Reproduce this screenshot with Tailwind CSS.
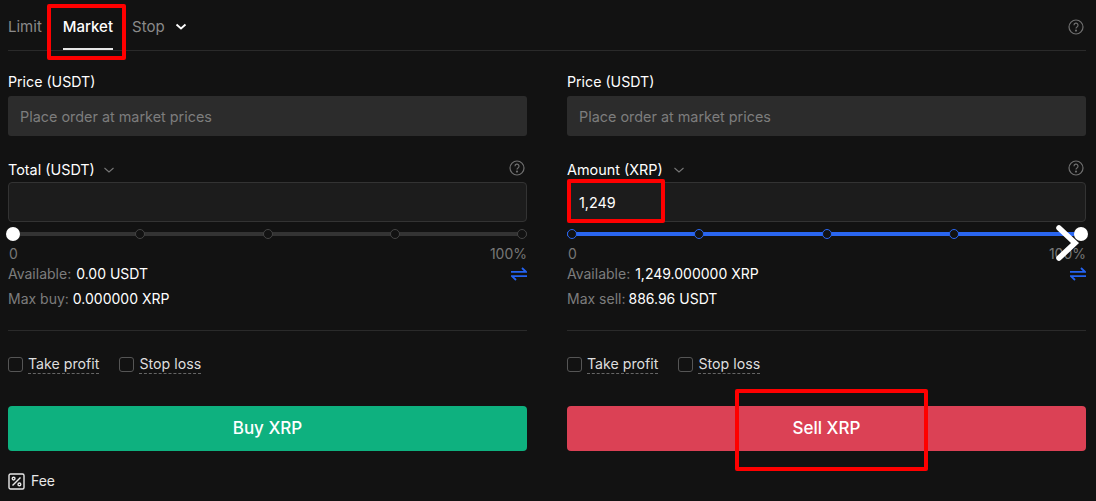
<!DOCTYPE html>
<html><head><meta charset="utf-8"><script src="https://cdn.jsdelivr.net/npm/@tailwindcss/browser@4"></script></head>
<body class="bg-[#121212]">
<div class="relative w-[1096px] h-[501px] overflow-hidden bg-[#121212] pl-2 pr-2.5 font-['Inter',sans-serif] text-sm text-white">
  <!-- Tabs -->
  <div class="flex h-[51px] items-start border-b border-[#2a2a2a] text-[15px] text-[#8a8a8a]">
    <span class="mt-[17px] leading-5">Limit</span>
    <span class="relative ml-[21px] mt-[17px] h-[33px] font-medium leading-5 text-white">Market<span class="absolute bottom-0 left-0 h-0.5 w-full bg-[#e6e6e6]"></span></span>
    <span class="ml-[19px] mt-[17px] leading-5">Stop</span>
    <svg class="ml-2.5 mt-[21px]" width="12" height="12" viewBox="0 0 12 12" fill="none" stroke="#fff" stroke-width="1.8"><path d="M1.5 3.5 6 7.5l4.5-4"/></svg>
    <svg class="ml-auto mr-[2px] mt-[19px]" width="16" height="16" viewBox="0 0 16 16" fill="none" stroke="#6f6f6f" stroke-width="1.2"><circle cx="8" cy="8" r="7"/><path d="M6 6.2a2 2 0 1 1 3 1.7c-.7.4-1 .8-1 1.6"/><circle cx="8" cy="11.6" r=".5" fill="#6f6f6f"/></svg>
  </div>
  <div class="grid grid-cols-[519px_519px] gap-x-10">
    <!-- Buy -->
    <div>
      <div class="mt-[21px] text-[14.2px] leading-5">Price (USDT)</div>
      <div class="mt-1 flex h-10 items-center rounded-[3px] bg-[#2c2c2c] pl-3 pt-[2px] text-[14.4px] text-[#7d7d7d]">Place order at market prices</div>
      <div class="mt-6 flex h-5 items-center text-[14.4px]">Total (USDT)<svg class="ml-2" width="12" height="12" viewBox="0 0 12 12" fill="none" stroke="#777" stroke-width="1.1"><path d="M1.5 4 6 8l4.5-4"/></svg>
        <svg class="ml-auto mr-[2px] -mt-1" width="16" height="16" viewBox="0 0 16 16" fill="none" stroke="#6f6f6f" stroke-width="1.2"><circle cx="8" cy="8" r="7"/><path d="M6 6.2a2 2 0 1 1 3 1.7c-.7.4-1 .8-1 1.6"/><circle cx="8" cy="11.6" r=".5" fill="#6f6f6f"/></svg></div>
      <div class="mt-[2px] h-10 rounded-[4px] border border-[#333] bg-[#1c1c1c]"></div>
      <div class="relative mt-[5px] flex h-3.5 items-center">
        <div class="absolute inset-x-0 h-1 bg-[#333]"></div>
        <div class="relative flex w-full items-center justify-between">
          <span class="-mx-[2px] h-3.5 w-3.5 rounded-full bg-white"></span>
          <span class="h-2.5 w-2.5 rounded-full border border-[#444] bg-[#121212]"></span>
          <span class="h-2.5 w-2.5 rounded-full border border-[#444] bg-[#121212]"></span>
          <span class="h-2.5 w-2.5 rounded-full border border-[#444] bg-[#121212]"></span>
          <span class="h-2.5 w-2.5 rounded-full border border-[#444] bg-[#121212]"></span>
        </div>
      </div>
      <div class="mt-[3px] flex justify-between leading-5 text-[#777]"><span class="pl-px">0</span><span>100%</span></div>
      <div class="flex h-5 items-center text-[#7d7d7d]">Available:<span class="ml-[5px] text-white">0.00 USDT</span>
        <svg class="ml-auto" width="16" height="14" viewBox="0 0 16 14" fill="none" stroke="#2463f2" stroke-width="1.8"><path d="M0 4.8h15L11 1M16 9.2H1L5 13"/></svg></div>
      <div class="mt-[5px] flex h-5 items-center text-[#7d7d7d]">Max buy:<span class="ml-1 text-white">0.000000 XRP</span></div>
      <div class="mt-[21px] h-px bg-[#2a2a2a]"></div>
      <div class="mt-[23px] flex h-5 items-center text-[14.2px] text-[#dedede]">
        <span class="h-[15px] w-[15px] rounded-[3px] border border-[#555]"></span>
        <span class="ml-[5px] border-b border-dashed border-[#666] leading-[18px]">Take profit</span>
        <span class="ml-5 h-[15px] w-[15px] rounded-[3px] border border-[#555]"></span>
        <span class="ml-[5px] border-b border-dashed border-[#666] leading-[18px]">Stop loss</span>
      </div>
      <button class="mt-[32px] flex h-[45px] w-full items-center justify-center rounded-[4px] bg-[#0eb17f] text-[17px] font-medium text-white">Buy XRP</button>
      <div class="mt-5 flex h-5 items-center text-[#e8e8e8]">
        <svg width="17" height="17" viewBox="0 0 17 17" fill="none" stroke="#e8e8e8" stroke-width="1.4"><rect x="1" y="1" width="15" height="15" rx="1.5"/><path d="M4.5 12.5 12.5 4.5"/><circle cx="5.6" cy="5.6" r="1.4"/><circle cx="11.4" cy="11.4" r="1.4"/></svg>
        <span class="ml-1.5">Fee</span>
      </div>
    </div>
    <!-- Sell -->
    <div>
      <div class="mt-[21px] text-[14.2px] leading-5">Price (USDT)</div>
      <div class="mt-1 flex h-10 items-center rounded-[3px] bg-[#2c2c2c] pl-3 pt-[2px] text-[14.4px] text-[#7d7d7d]">Place order at market prices</div>
      <div class="mt-6 flex h-5 items-center text-[14.4px]">Amount (XRP)<svg class="ml-2.5" width="12" height="12" viewBox="0 0 12 12" fill="none" stroke="#777" stroke-width="1.1"><path d="M1.5 4 6 8l4.5-4"/></svg>
        <svg class="ml-auto mr-[2px] -mt-1" width="16" height="16" viewBox="0 0 16 16" fill="none" stroke="#6f6f6f" stroke-width="1.2"><circle cx="8" cy="8" r="7"/><path d="M6 6.2a2 2 0 1 1 3 1.7c-.7.4-1 .8-1 1.6"/><circle cx="8" cy="11.6" r=".5" fill="#6f6f6f"/></svg></div>
      <div class="mt-[2px] flex h-10 items-center rounded-[4px] border border-[#333] bg-[#1c1c1c] pl-[11px] pt-[2px] text-[14.4px]">1,249</div>
      <div class="relative mt-[5px] flex h-3.5 items-center">
        <div class="absolute inset-x-0 h-1 bg-[#2a66f0]"></div>
        <div class="relative flex w-full items-center justify-between">
          <span class="h-2.5 w-2.5 rounded-full border border-[#2a66f0] bg-[#121212]"></span>
          <span class="h-2.5 w-2.5 rounded-full border border-[#2a66f0] bg-[#121212]"></span>
          <span class="h-2.5 w-2.5 rounded-full border border-[#2a66f0] bg-[#121212]"></span>
          <span class="h-2.5 w-2.5 rounded-full border border-[#2a66f0] bg-[#121212]"></span>
          <span class="-mx-[2px] h-3.5 w-3.5 rounded-full bg-white"></span>
        </div>
      </div>
      <div class="mt-[3px] flex justify-between leading-5 text-[#777]"><span class="pl-px">0</span><span>100%</span></div>
      <div class="flex h-5 items-center text-[#7d7d7d]">Available:<span class="ml-[5px] text-white">1,249.000000 XRP</span>
        <svg class="ml-auto" width="16" height="14" viewBox="0 0 16 14" fill="none" stroke="#2463f2" stroke-width="1.8"><path d="M0 4.8h15L11 1M16 9.2H1L5 13"/></svg></div>
      <div class="mt-[5px] flex h-5 items-center text-[#7d7d7d]">Max sell:<span class="ml-[3px] text-white">886.96 USDT</span></div>
      <div class="mt-[21px] h-px bg-[#2a2a2a]"></div>
      <div class="mt-[23px] flex h-5 items-center text-[14.2px] text-[#dedede]">
        <span class="h-[15px] w-[15px] rounded-[3px] border border-[#555]"></span>
        <span class="ml-[5px] border-b border-dashed border-[#666] leading-[18px]">Take profit</span>
        <span class="ml-5 h-[15px] w-[15px] rounded-[3px] border border-[#555]"></span>
        <span class="ml-[5px] border-b border-dashed border-[#666] leading-[18px]">Stop loss</span>
      </div>
      <button class="mt-[32px] flex h-[45px] w-full items-center justify-center rounded-[4px] bg-[#db4155] text-[17px] font-medium text-white">Sell XRP</button>
    </div>
  </div>
  <!-- Annotations -->
  <div class="absolute left-[47px] top-[4px] h-[56px] w-[79px] rounded-[2px] border-[4px] border-[#ff0000]"></div>
  <div class="absolute left-[567px] top-[179px] h-[44px] w-[98px] rounded-[2px] border-[4px] border-[#ff0000]"></div>
  <div class="absolute left-[735px] top-[389px] h-[82px] w-[193px] rounded-[2px] border-[4px] border-[#ff0000]"></div>
  <svg class="absolute left-[1053px] top-[222px]" width="28" height="40" viewBox="0 0 28 40" fill="none" stroke="#fff" stroke-width="5.5" stroke-linecap="round" stroke-linejoin="miter"><path d="M6 6 22 21 6 36"/></svg>
</div>
</body></html>
